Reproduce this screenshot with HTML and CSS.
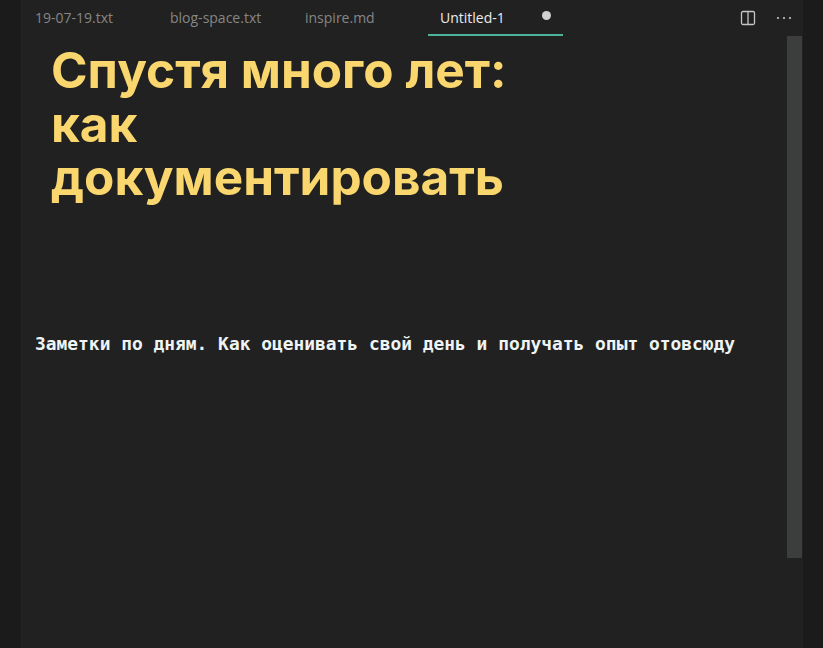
FILE: index.html
```html
<!DOCTYPE html>
<html lang="ru">
<head>
<meta charset="utf-8">
<title>Untitled-1</title>
<link rel="stylesheet" href="styles.css">
</head>
<body>
<div class="app">
  <div class="side-left"></div>
  <main class="main">
    <div class="tabbar">
      <div class="tab">19-07-19.txt</div>
      <div class="tab">blog-space.txt</div>
      <div class="tab">inspire.md</div>
      <div class="tab active"><span>Untitled-1</span><span class="dirty"></span></div>
      <div class="actions">
        <svg class="icon" width="16" height="16" viewBox="0 0 16 16"><rect x="1.5" y="1.5" width="13" height="13" rx="1.5" fill="none" stroke="#c5c5c5" stroke-width="1.3"/><line x1="8" y1="1.5" x2="8" y2="14.5" stroke="#c5c5c5" stroke-width="1.3"/></svg>
        <svg class="icon" width="16" height="16" viewBox="0 0 16 16"><circle cx="2" cy="8" r="1.1" fill="#c5c5c5"/><circle cx="8" cy="8" r="1.1" fill="#c5c5c5"/><circle cx="14" cy="8" r="1.1" fill="#c5c5c5"/></svg>
      </div>
    </div>
    <div class="editor">
      <h1 class="title"><span class="line">Спустя много лет:</span><span class="line">как</span><span class="line">документировать</span></h1>
      <p class="note">Заметки по дням. Как оценивать свой день и получать опыт отовсюду</p>
      <div class="scrollbar"></div>
    </div>
  </main>
  <div class="side-right"></div>
</div>
</body>
</html>
```
FILE: styles.css
```css
html, body {
  margin: 0;
  padding: 0;
  height: 100%;
  background: #1c1c1c;
  overflow: hidden;
}
.app {
  display: flex;
  width: 823px;
  height: 648px;
}
.side-left {
  width: 22px;
  flex: none;
  background: #1b1b1b;
  border-right: 1px solid #252525;
  box-sizing: border-box;
}
.main {
  width: 781px;
  flex: none;
  background: #212121;
  display: flex;
  flex-direction: column;
}
.side-right {
  flex: 1;
  background: #1b1b1b;
}
.tabbar {
  height: 36px;
  display: flex;
  align-items: stretch;
  padding-left: 1px;
  font-family: "Open Sans", "Noto Sans", sans-serif;
  font-size: 14px;
}
.tab {
  width: 135px;
  box-sizing: border-box;
  padding-left: 12px;
  padding-right: 10px;
  display: flex;
  align-items: center;
  justify-content: space-between;
  color: #868686;
  padding-bottom: 1px;
}
.tab.active {
  color: #ececec;
  border-bottom: 2px solid #4db39a;
  padding-bottom: 0;
  height: 36px;
  box-sizing: border-box;
}
.dirty {
  width: 9px;
  height: 9px;
  border-radius: 50%;
  background: #d0d0d0;
  margin-right: 2px;
  margin-bottom: 3px;
}
.actions {
  margin-left: auto;
  display: flex;
  align-items: center;
  gap: 20px;
  padding-right: 11px;
  padding-bottom: 1px;
}
.editor {
  flex: 1;
  position: relative;
}
.title {
  margin: 0;
  padding: 8px 0 0 29px;
  font-family: "Inter", "Roboto", sans-serif;
  font-weight: 700;
  font-size: 49.5px;
  line-height: 53.5px;
  color: #fad66f;
  display: flex;
  flex-direction: column;
}
.line {
  display: block;
  height: 53.5px;
}
.note {
  margin: 0;
  padding: 130px 0 0 13px;
  font-family: "DejaVu Sans Mono", "Liberation Mono", monospace;
  font-weight: 700;
  font-size: 17.9px;
  line-height: 18px;
  color: #eef3f4;
}
.scrollbar {
  position: absolute;
  top: 0;
  right: 1px;
  width: 15px;
  height: 522px;
  background: #3c3e3d;
}
```
